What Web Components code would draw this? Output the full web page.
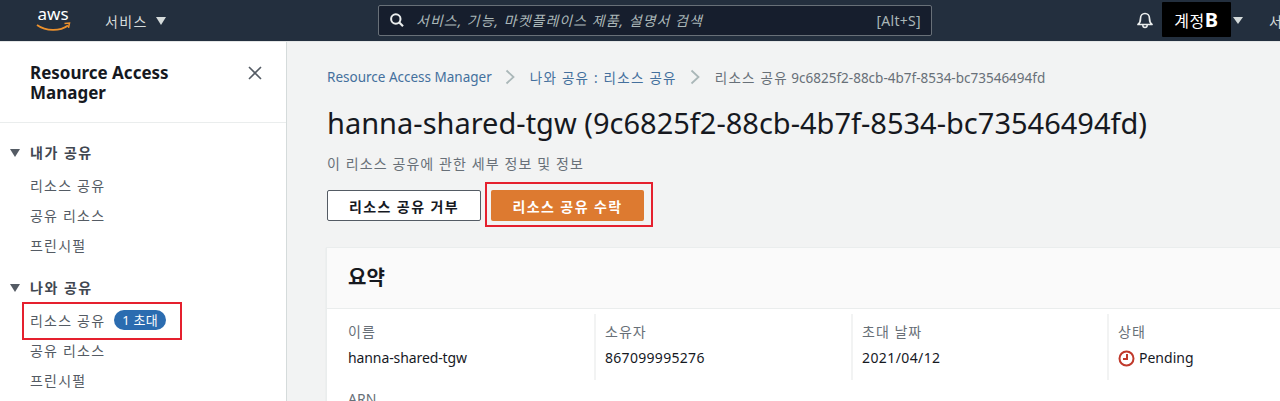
<!DOCTYPE html>
<html lang="ko">
<head>
<meta charset="UTF-8" />
<title>Resource Access Manager</title>
<style>
  html, body { margin: 0; height: 401px; overflow: hidden; background: #f2f3f3; }
  body { font-family: "Noto Sans", "Noto Sans CJK KR", sans-serif; font-size: 14px; color: #16191f; }
  .layout { display: flex; height: 359px; }
</style>
</head>
<body>
<top-bar></top-bar>
<div class="layout">
  <side-nav></side-nav>
  <detail-page></detail-page>
</div>

<script>
class TopBar extends HTMLElement {
  constructor() {
    super()
    this.attachShadow({ mode: 'open' }).innerHTML = `
    <style>
      :host { display: flex; align-items: center; height: 41px; background: #232f3e; border-bottom: 1px solid #e4e6e6; color: #d5dbdb; overflow: hidden; }
      .logo { margin-left: 36px; width: 35px; height: 32px; flex: none; display: block; margin-top: -4px; }
      .services { margin-left: 34px; width: 60px; display: flex; align-items: center; gap: 8px; font-size: 14px; white-space: nowrap; letter-spacing: 1.400px; flex: none; }
      .tri { width: 0; height: 0; border-left: 5.500px solid transparent; border-right: 5.500px solid transparent; border-top: 8px solid #d5dbdb; flex: none; }
      .search { margin-left: 213px; width: 554px; height: 31px; margin-top: -1px; box-sizing: border-box; border: 1px solid #687078; border-radius: 2px; background: #161e2d; display: flex; align-items: center; padding: 0 10px; flex: none; }
      .search svg { flex: none; }
      .ph { margin-left: 11px; flex: 1; font-style: italic; font-size: 14px; color: #aab7b8; white-space: nowrap; letter-spacing: 1px; }
      .kbd { font-size: 14px; color: #aab7b8; letter-spacing: .3px; }
      .bell { margin-left: 204px; flex: none; display: block; margin-top: -1px; }
      .acct { margin-left: 8px; width: 69px; height: 35px; margin-top: -3px; background: #000; border-radius: 1px; color: #fff; display: flex; align-items: center; justify-content: center; font-size: 16px; letter-spacing: .5px; flex: none; padding-top: 1px; box-sizing: border-box; }
      .acct b { font-size: 20px; font-weight: 700; }
      .caret { margin-left: 2px; border-left-width: 5px; border-right-width: 5px; border-top-width: 7px; }
      .sup { margin-left: 26px; font-size: 14px; flex: none; white-space: nowrap; }
    </style>
    <svg class="logo" viewBox="0 0 35 32" aria-label="aws">
      <text x="1.500" y="17" font-family="Noto Sans, sans-serif" font-size="17" fill="#fff">aws</text>
      <path d="M1 22c9 6.500 23 6.500 31 .5" fill="none" stroke="#ec912d" stroke-width="1.800"/>
      <path d="M28.500 20.500l5-.5-1 4.800" fill="none" stroke="#ec912d" stroke-width="1.500"/>
    </svg>
    <div class="services">서비스<span class="tri"></span></div>
    <div class="search">
      <svg width="16" height="16" viewBox="0 0 16 16"><circle cx="6.800" cy="7" r="4.700" fill="none" stroke="#eaeded" stroke-width="2"/><path d="M10.300 10.500l3.700 3.700" stroke="#eaeded" stroke-width="2.200"/></svg>
      <span class="ph">서비스, 기능, 마켓플레이스 제품, 설명서 검색</span>
      <span class="kbd">[Alt+S]</span>
    </div>
    <svg class="bell" width="18" height="18" viewBox="0 0 18 18"><path d="M2 13.500c2-1.500 2.500-3 2.500-6C4.500 4.500 6.500 2.500 9 2.500s4.500 2 4.500 5c0 3 .5 4.500 2.500 6z" fill="none" stroke="#eaeded" stroke-width="1.700" stroke-linejoin="round"/><path d="M6.800 14c0 1.500 1 2.500 2.200 2.500s2.200-1 2.200-2.500" fill="none" stroke="#eaeded" stroke-width="1.500"/></svg>
    <div class="acct">계정<b>B</b></div>
    <span class="tri caret"></span>
    <div class="sup">서</div>`
  }
}

class NavGroup extends HTMLElement {
  constructor() {
    super()
    this.attachShadow({ mode: 'open' }).innerHTML = `
    <style>
      :host { display: block; }
      .head { display: flex; align-items: center; height: 22px; margin-bottom: 7px; font-size: 14px; font-weight: 700; color: #414750; letter-spacing: 1.500px; }
      .tri { width: 0; height: 0; margin: 1px 10px 0 10px; border-left: 5.500px solid transparent; border-right: 5.500px solid transparent; border-top: 8px solid #545b64; flex: none; }
      .items { display: flex; flex-direction: column; }
    </style>
    <div class="head"><span class="tri"></span>${this.getAttribute('label')}</div>
    <div class="items"><slot></slot></div>`
  }
}

class NavItem extends HTMLElement {
  constructor() {
    super()
    this.attachShadow({ mode: 'open' }).innerHTML = `
    <style>
      :host { display: flex; align-items: center; height: 30px; padding-left: 30px; font-size: 14px; color: #545b64; letter-spacing: 1.200px; gap: 9px; position: relative; white-space: nowrap; }
    </style>
    <slot></slot>`
  }
}

class SideNav extends HTMLElement {
  constructor() {
    super()
    this.attachShadow({ mode: 'open' }).innerHTML = `
    <style>
      :host { display: block; width: 287px; flex: none; box-sizing: border-box; background: #fff; border-right: 1px solid #d5dbdb; position: relative; }
      .title { height: 81px; box-sizing: border-box; padding: 21px 0 0 30px; border-bottom: 1px solid #eaeded; font-size: 17px; line-height: 20px; font-weight: 700; color: #16191f; display: flex; justify-content: space-between; }
      .title svg { margin: 2px 23px 0 0; flex: none; }
      .groups { display: flex; flex-direction: column; gap: 16px; padding-top: 18px; }
      .badge { background: #2b6cb0; color: #fff; border-radius: 10px; height: 20px; padding: 0 8px; font-size: 13px; line-height: 20px; letter-spacing: .2px; }
      .mark { position: absolute; left: 22px; top: -3px; width: 160px; height: 38px; box-sizing: border-box; border: 2px solid #e5202e; pointer-events: none; }
      .wrap { position: relative; }
    </style>
    <div class="title"><span>Resource Access<br>Manager</span>
      <svg width="16" height="16" viewBox="0 0 16 16"><path d="M2 2l12 12M14 2L2 14" stroke="#545b64" stroke-width="1.600" fill="none"/></svg>
    </div>
    <div class="groups">
      <nav-group label="내가 공유">
        <nav-item>리소스 공유</nav-item>
        <nav-item>공유 리소스</nav-item>
        <nav-item>프린시펄</nav-item>
      </nav-group>
      <nav-group label="나와 공유">
        <div class="wrap">
          <nav-item>리소스 공유<span class="badge">1 초대</span></nav-item>
          <div class="mark"></div>
        </div>
        <nav-item>공유 리소스</nav-item>
        <nav-item>프린시펄</nav-item>
      </nav-group>
    </div>`
  }
}

class DetailField extends HTMLElement {
  constructor() {
    super()
    this.attachShadow({ mode: 'open' }).innerHTML = `
    <style>
      :host { display: block; box-sizing: border-box; height: 66px; padding-left: 9px; border-left: 2px solid #f2f3f3; }
      :host([first]) { border-left: 0; padding-left: 21px; }
      .k { font-size: 14px; line-height: 20px; color: #687078; margin-top: 8px; letter-spacing: 1px; white-space: nowrap; }
      .v { font-size: 14px; line-height: 20px; margin-top: 6px; color: #16191f; display: flex; align-items: center; gap: 4px; white-space: nowrap; }
    </style>
    <div class="k">${this.getAttribute('label')}</div>
    <div class="v"><slot></slot></div>`
  }
}

class SummaryCard extends HTMLElement {
  constructor() {
    super()
    this.attachShadow({ mode: 'open' }).innerHTML = `
    <style>
      :host { display: block; width: 1000px; background: #fff; box-shadow: 0 0 0 1px #eaeded, -1px 0 1px #d5dbdb; }
      .head { height: 61px; box-sizing: border-box; background: #fafafa; border-bottom: 1px solid #eaeded; padding: 0 0 3px 21px; display: flex; align-items: center; font-size: 20px; font-weight: 700; color: #16191f; }
      .cols { display: grid; grid-template-columns: 267px 257px 256px 1fr; padding-top: 5px; }
      .arn { padding: 9px 0 0 21px; font-size: 14px; line-height: 20px; color: #687078; }
    </style>
    <div class="head">요약</div>
    <div class="cols"><slot></slot></div>
    <div class="arn">ARN</div>`
  }
}

class DetailPage extends HTMLElement {
  constructor() {
    super()
    this.attachShadow({ mode: 'open' }).innerHTML = `
    <style>
      :host { display: block; flex: 1; min-width: 0; box-sizing: border-box; padding-left: 40px; overflow: hidden; }
      .crumbs { display: flex; align-items: center; height: 20px; margin-top: 25px; font-size: 13.500px; white-space: nowrap; color: #687078; }
      .crumbs a { color: #44709d; }
      .ko { letter-spacing: 1.250px; }
      .crumbs svg { margin: 0 15px 0 13px; flex: none; }
      h1 { margin: 18px 0 0; font-size: 29px; line-height: 36px; font-weight: 400; color: #16191f; white-space: nowrap; }
      p { margin: 13px 0 0; font-size: 14px; line-height: 20px; color: #687078; letter-spacing: 1.100px; }
      .actions { display: flex; gap: 10px; margin-top: 16px; margin-bottom: 27px; }
      .btn { box-sizing: border-box; height: 31px; display: flex; align-items: center; justify-content: center; font-size: 14px; font-weight: 700; letter-spacing: 1.400px; border-radius: 2px; }
      .ghost { width: 154px; background: #fff; border: 1px solid #545b64; color: #16191f; }
      .primary { width: 153px; background: #dd7a30; color: #fff; position: relative; }
      .primary::after { content: ""; position: absolute; inset: -8px -9px -6px -6px; border: 2px solid #e5202e; }
    </style>
    <div class="crumbs">
      <a>Resource Access Manager</a>
      <svg width="10" height="16" viewBox="0 0 10 16"><path d="M1.500 1.500l7 6.500-7 6.500" fill="none" stroke="#aab7b8" stroke-width="1.800"/></svg>
      <a class="ko">나와 공유 : 리소스 공유</a>
      <svg width="10" height="16" viewBox="0 0 10 16"><path d="M1.500 1.500l7 6.500-7 6.500" fill="none" stroke="#aab7b8" stroke-width="1.800"/></svg>
      <span><span class="ko">리소스 공유</span> 9c6825f2-88cb-4b7f-8534-bc73546494fd</span>
    </div>
    <h1>hanna-shared-tgw (9c6825f2-88cb-4b7f-8534-bc73546494fd)</h1>
    <p>이 리소스 공유에 관한 세부 정보 및 정보</p>
    <div class="actions">
      <div class="btn ghost">리소스 공유 거부</div>
      <div class="btn primary">리소스 공유 수락</div>
    </div>
    <summary-card>
      <detail-field first label="이름"><span style="letter-spacing:-.1px">hanna-shared-tgw</span></detail-field>
      <detail-field label="소유자"><span style="letter-spacing:.3px">867099995276</span></detail-field>
      <detail-field label="초대 날짜"><span style="letter-spacing:.4px">2021/04/12</span></detail-field>
      <detail-field label="상태">
        <svg width="17" height="17" viewBox="0 0 17 17"><circle cx="8.500" cy="8.500" r="7" fill="none" stroke="#c0392b" stroke-width="2"/><path d="M9 4v5H5" fill="none" stroke="#c0392b" stroke-width="2"/></svg>Pending
      </detail-field>
    </summary-card>`
  }
}

customElements.define('top-bar', TopBar)
customElements.define('nav-group', NavGroup)
customElements.define('nav-item', NavItem)
customElements.define('side-nav', SideNav)
customElements.define('detail-field', DetailField)
customElements.define('summary-card', SummaryCard)
customElements.define('detail-page', DetailPage)
</script>
</body>
</html>
